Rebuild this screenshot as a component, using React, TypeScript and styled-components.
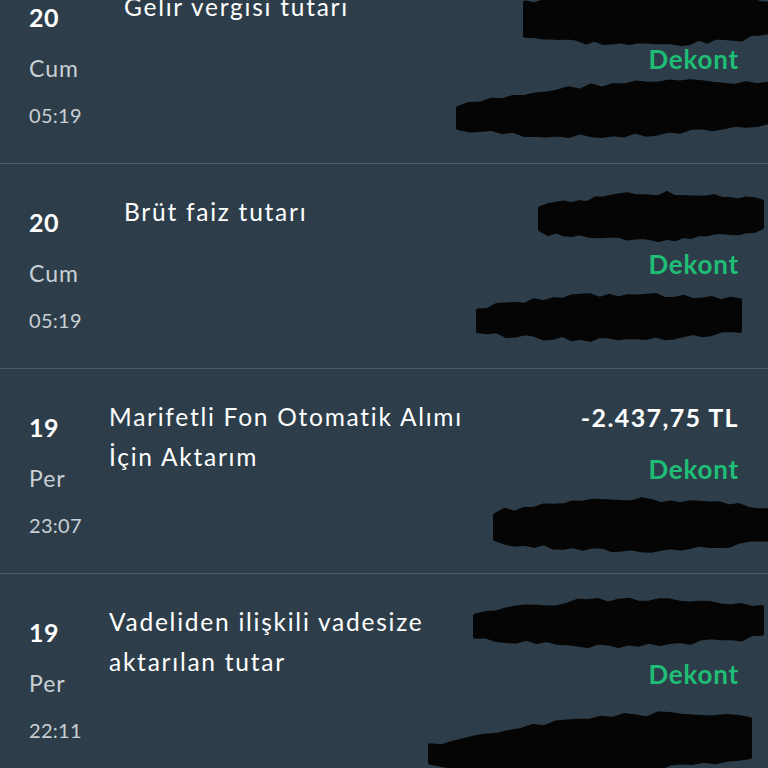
import React from "react";
import styled, { createGlobalStyle } from "styled-components";

const Global = createGlobalStyle`
  html, body { margin: 0; padding: 0; background: #2d3e4a; overflow: hidden; }
  body { font-family: Lato, "Open Sans", sans-serif; -webkit-font-smoothing: antialiased; }
`;

const List = styled.div`
  margin-top: -41px;
  width: 768px;
`;

const Row = styled.div`
  position: relative;
  height: 204px;
  border-bottom: 1px solid #4a5a66;
  display: grid;
  grid-template-columns: 109px 1fr auto;
`;

const DateCol = styled.div`
  display: flex;
  flex-direction: column;
  padding: 43px 0 0 29px;
`;

const Day = styled.div`
  color: #ffffff;
  font-size: 25px;
  font-weight: 700;
  line-height: 30px;
  letter-spacing: 0.5px;
`;

const WeekDay = styled.div`
  color: #c9d0d5;
  font-size: 23px;
  line-height: 30px;
  margin-top: 21px;
  letter-spacing: 1px;
`;

const Time = styled.div`
  color: #c9d0d5;
  font-size: 20px;
  line-height: 30px;
  margin-top: 17px;
  letter-spacing: 0.3px;
`;

const Title = styled.div<{ $indent: number }>`
  color: #ffffff;
  font-size: 24.5px;
  line-height: 40px;
  padding: 28px 0 0 ${(p) => p.$indent}px;
  letter-spacing: 1.75px;
`;

const RightCol = styled.div`
  display: flex;
  flex-direction: column;
  align-items: flex-end;
  padding: 28px 30px 0 0;
`;

const Amount = styled.div`
  color: #ffffff;
  font-size: 25px;
  font-weight: 700;
  line-height: 40px;
  height: 40px;
  letter-spacing: 1.4px;
  margin-right: -1px;
`;

const Dekont = styled.div`
  color: #1fbd76;
  font-size: 26px;
  font-weight: 700;
  line-height: 40px;
  margin-top: 12px;
  letter-spacing: 0.8px;
  margin-right: -1px;
`;

const Redaction = styled.svg`
  position: absolute;
  overflow: visible;
`;

type Sc = { x: number; y: number; w: number; h: number; tilt?: number; seed: number };

function rng(seed: number) {
  let s = seed;
  return () => {
    s = (s * 9301 + 49297) % 233280;
    return s / 233280;
  };
}

function Scribble({ x, y, w, h, tilt = 0, seed }: Sc) {
  const r = rng(seed);
  const n = 28;
  const top: string[] = [];
  const bot: string[] = [];
  for (let i = 0; i <= n; i++) {
    const t = i / n;
    const px = t * w;
    const tl = tilt * (1 - t);
    const edge = Math.sin(t * Math.PI);
    const ty = tl + (1 - edge) * h * 0.18 + r() * 5;
    const by = h - tilt * 0.1 * t - (1 - edge) * h * 0.15 - r() * 5 + (tilt ? tilt * 0.2 * (1 - t) : 0);
    top.push(`${px.toFixed(1)},${ty.toFixed(1)}`);
    bot.unshift(`${px.toFixed(1)},${Math.min(h, by).toFixed(1)}`);
  }
  const pts = [...top, ...bot].join(" ");
  return (
    <Redaction style={{ left: x, top: y, width: w, height: h }} viewBox={`0 0 ${w} ${h}`}>
      <polygon points={pts} fill="#050505" stroke="#050505" strokeWidth={4} strokeLinejoin="round" />
    </Redaction>
  );
}

type Item = {
  day: string;
  wd: string;
  time: string;
  title: string[];
  indent: number;
  amount?: string;
  scribbles: Sc[];
};

const items: Item[] = [
  {
    day: "20",
    wd: "Cum",
    time: "05:19",
    title: ["Gelir vergisi tutarı"],
    indent: 15,
    scribbles: [
      { x: 525, y: 32, w: 243, h: 54, seed: 3 },
      { x: 458, y: 113, w: 310, h: 64, tilt: 22, seed: 7 },
    ],
  },
  {
    day: "20",
    wd: "Cum",
    time: "05:19",
    title: ["Brüt faiz tutarı"],
    indent: 15,
    scribbles: [
      { x: 540, y: 26, w: 222, h: 50, tilt: 6, seed: 11 },
      { x: 478, y: 126, w: 262, h: 50, tilt: 8, seed: 13 },
    ],
  },
  {
    day: "19",
    wd: "Per",
    time: "23:07",
    title: ["Marifetli Fon Otomatik Alımı", "İçin Aktarım"],
    indent: 0,
    amount: "-2.437,75 TL",
    scribbles: [{ x: 495, y: 128, w: 273, h: 54, tilt: 4, seed: 17 }],
  },
  {
    day: "19",
    wd: "Per",
    time: "22:11",
    title: ["Vadeliden ilişkili vadesize", "aktarılan tutar"],
    indent: 0,
    scribbles: [
      { x: 475, y: 22, w: 287, h: 50, tilt: 6, seed: 19 },
      { x: 430, y: 128, w: 320, h: 70, tilt: 30, seed: 23 },
    ],
  },
];

export default function App() {
  return (
    <>
      <Global />
      <List>
        {items.map((it, i) => (
          <Row key={i}>
            <DateCol>
              <Day>{it.day}</Day>
              <WeekDay>{it.wd}</WeekDay>
              <Time>{it.time}</Time>
            </DateCol>
            <Title $indent={it.indent}>
              {it.title.map((l, j) => (
                <div key={j}>{l}</div>
              ))}
            </Title>
            <RightCol>
              <Amount>{it.amount ?? ""}</Amount>
              <Dekont>Dekont</Dekont>
            </RightCol>
            {it.scribbles.map((s, k) => (
              <Scribble key={k} {...s} />
            ))}
          </Row>
        ))}
      </List>
    </>
  );
}
